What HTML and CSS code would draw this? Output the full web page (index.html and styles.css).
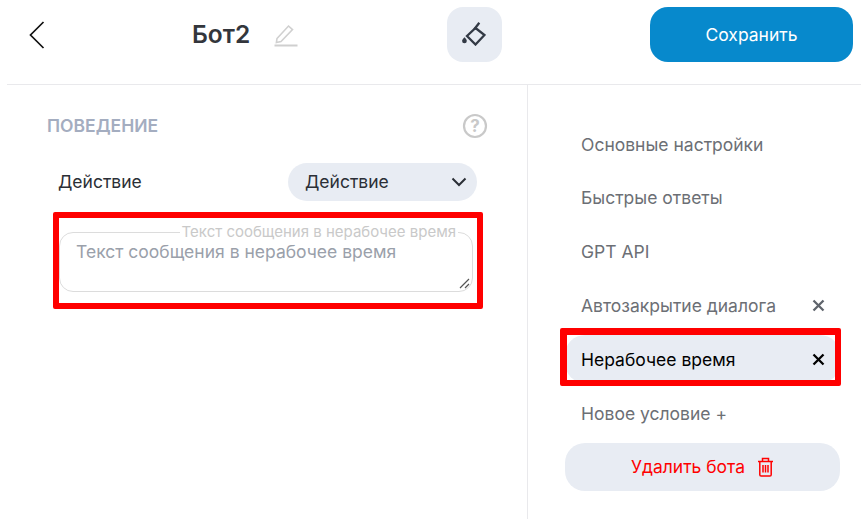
FILE: index.html
```html
<!DOCTYPE html>
<html lang="ru">
<head>
    <meta charset="UTF-8">
    <meta name="viewport" content="width=device-width, initial-scale=1.0">
    <title>Бот2</title>
    <link rel="stylesheet" href="styles.css">
</head>
<body>
    <header class="topbar">
        <svg class="back-icon" width="16" height="28" viewBox="0 0 16 28"><path d="M14.500 1 1.500 14l13 13" fill="none" stroke="#111" stroke-width="1.700"/></svg>
        <div class="bot-name">
            <h1>Бот2</h1>
            <svg width="26" height="26" viewBox="0 0 26 26"><path d="M4 17.500 15.500 5l4 3.600L8 20.500l-4.600 1z" fill="none" stroke="#d0d0d0" stroke-width="1.600"/><path d="M1.500 24.500h23" stroke="#cfcfcf" stroke-width="2"/></svg>
        </div>
        <button class="theme-btn">
            <svg width="24" height="24" viewBox="0 0 24 24"><path d="M13.500 6 22.500 13 13.500 22.500 5 14z" fill="none" stroke="#333a45" stroke-width="2.300"/><path d="M12.300 7.300 17.300 .7" stroke="#333a45" stroke-width="2.300"/><path d="M2.500 15.300c1.400 1.600 2.300 2.500 2.300 3.600a2.350 2.350 0 0 1-4.700 0c0-1.100 1-2 2.400-3.600z" fill="#333a45"/></svg>
        </button>
        <button class="save-btn">Сохранить</button>
    </header>

    <main class="layout">
        <section class="settings">
            <div class="section-head">
                <h2>ПОВЕДЕНИЕ</h2>
                <svg width="26" height="26" viewBox="0 0 26 26"><circle cx="13" cy="13" r="11" fill="none" stroke="#c9c9c9" stroke-width="2.200"/><text x="13" y="19" text-anchor="middle" class="help-mark">?</text></svg>
            </div>
            <div class="field-row">
                <span class="field-text">Действие</span>
                <div class="select">
                    <span class="field-text">Действие</span>
                    <svg width="16" height="10" viewBox="0 0 16 10"><path d="M1.500 1.500 8 8l6.500-6.500" fill="none" stroke="#2b2f36" stroke-width="2"/></svg>
                </div>
            </div>
            <div class="textarea-box">
                <span class="float-label">Текст сообщения в нерабочее время</span>
                <span class="placeholder">Текст сообщения в нерабочее время</span>
                <svg class="resize-grip" width="11" height="11" viewBox="0 0 11 11"><path d="M1 10 10 1M6 10l4-4" stroke="#555" stroke-width="1.200"/></svg>
            </div>
        </section>

        <nav class="side-menu">
            <a class="menu-item">Основные настройки</a>
            <a class="menu-item">Быстрые ответы</a>
            <a class="menu-item">GPT API</a>
            <a class="menu-item">Автозакрытие диалога <svg class="close" width="13" height="13" viewBox="0 0 13 13"><path d="M1.500 1.500l10 10M11.500 1.500l-10 10" stroke="#5f646c" stroke-width="2.300"/></svg></a>
            <a class="menu-item active">Нерабочее время <svg class="close" width="13" height="13" viewBox="0 0 13 13"><path d="M1.500 1.500l10 10M11.500 1.500l-10 10" stroke="#000" stroke-width="2.300"/></svg></a>
            <a class="menu-item">Новое условие +</a>
            <button class="delete-btn">
                Удалить бота
                <svg width="17" height="20" viewBox="0 0 17 20"><path d="M1 4.500h15M5.500 4V1.500h6V4M2.800 4.500v13.200a1.300 1.300 0 0 0 1.300 1.300h8.800a1.300 1.300 0 0 0 1.300-1.300V4.500M6 8v7.500M8.500 8v7.500M11 8v7.500" fill="none" stroke="#f00" stroke-width="1.500"/></svg>
            </button>
        </nav>
    </main>

    <div class="mark mark-textarea"></div>
    <div class="mark mark-item"></div>
</body>
</html>
```

FILE: styles.css
```css
* {
    box-sizing: border-box;
    margin: 0;
    padding: 0;
}

body {
    font-family: 'Inter', sans-serif;
    background: #fff;
    color: #2b2f36;
    height: 519px;
    overflow: hidden;
    position: relative;
}

button {
    border: none;
    font-family: inherit;
}

.topbar {
    height: 85px;
    margin-left: 7px;
    border-bottom: 1px solid #e9e9ec;
    display: flex;
    align-items: center;
}

.back-icon {
    margin-left: 22px;
    margin-top: -15px;
}

.bot-name {
    display: flex;
    align-items: center;
    gap: 23px;
    width: 110px;
    margin-left: 147px;
    margin-top: -16px;
}

.bot-name h1 {
    font-size: 24.500px;
    font-weight: 600;
    color: #33363c;
}

.theme-btn {
    width: 55px;
    height: 55px;
    border-radius: 16px;
    background: #e8ecf3;
    margin-left: 145px;
    margin-top: -15px;
    display: flex;
    align-items: center;
    justify-content: center;
}

.theme-btn svg {
    margin: -2px 2px 0 0;
}

.save-btn {
    width: 203px;
    height: 55px;
    border-radius: 18px;
    background: #0789cc;
    color: #fff;
    font-size: 17.500px;
    font-weight: 400;
    margin-left: 148px;
    margin-top: -15px;
}

.layout {
    display: flex;
    height: 434px;
    margin-left: 7px;
}

.settings {
    width: 521px;
    border-right: 1px solid #e9e9ec;
    padding: 28px 39px 0 40px;
}

.section-head {
    display: flex;
    justify-content: space-between;
    align-items: center;
}

.section-head h2 {
    font-size: 17.500px;
    font-weight: 600;
    color: #a4adc0;
    margin-top: -2px;
}

.help-mark {
    font-family: 'Inter', sans-serif;
    font-size: 17px;
    font-weight: 700;
    fill: #c9c9c9;
}

.field-row {
    display: flex;
    justify-content: space-between;
    align-items: center;
    font-size: 17.500px;
    margin: 24px 11px 0 11px;
}

.field-text {
    margin-bottom: 2px;
}

.select {
    width: 189px;
    height: 38px;
    border-radius: 19px;
    background: #e8ecf3;
    padding: 0 10px 0 17px;
    display: flex;
    align-items: center;
    justify-content: space-between;
}

.textarea-box {
    position: relative;
    height: 60px;
    margin: 31px 15px 0 12px;
    border: 1px solid #dcdcdc;
    border-radius: 14px;
    padding: 8px 16px;
}

.float-label {
    position: absolute;
    top: -10px;
    right: 14px;
    padding: 0 2px;
    background: #fff;
    color: #c9c9c9;
    font-size: 15px;
    line-height: 18px;
    white-space: nowrap;
}

.placeholder {
    display: block;
    font-size: 17.500px;
    line-height: 21px;
    color: #9aa0aa;
}

.resize-grip {
    position: absolute;
    right: 2px;
    bottom: 2px;
}

.side-menu {
    flex: 1;
    display: flex;
    flex-direction: column;
    gap: 5.800px;
    padding: 35.200px 21px 0 37px;
}

.menu-item {
    height: 48px;
    padding-left: 16px;
    padding-right: 15px;
    display: flex;
    align-items: center;
    justify-content: space-between;
    font-size: 17.500px;
    color: #6c6f75;
    flex-shrink: 0;
}

.menu-item.active {
    background: #e8ecf3;
    color: #000;
    border-radius: 20px;
}

.delete-btn {
    height: 48px;
    margin-top: -0.200px;
    flex-shrink: 0;
    border-radius: 20px;
    background: #e8ecf3;
    color: #f00;
    font-size: 17.500px;
    display: flex;
    align-items: center;
    justify-content: center;
    gap: 12px;
}

.mark {
    position: absolute;
    border: 6px solid #f00;
    border-radius: 2px;
}

.mark-textarea {
    left: 53px;
    top: 212px;
    width: 430px;
    height: 97px;
}

.mark-item {
    left: 560px;
    top: 328px;
    width: 281px;
    height: 58px;
    border-width: 7px 6px 6px 7px;
}
```
